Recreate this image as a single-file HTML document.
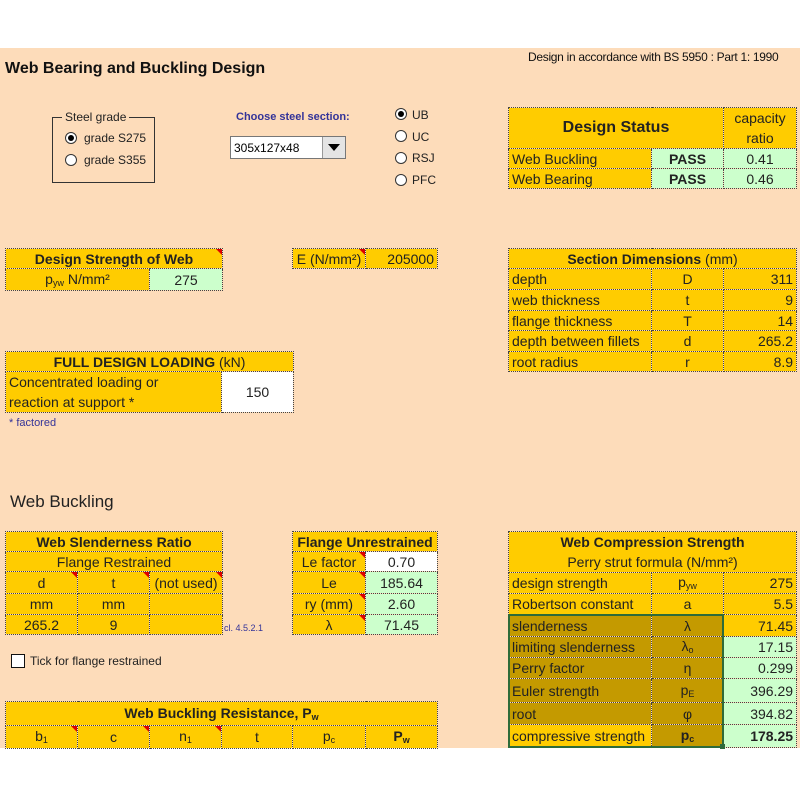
<!DOCTYPE html>
<html><head><meta charset="utf-8"><style>
*{margin:0;padding:0;box-sizing:border-box}
body{width:800px;height:800px;background:#fff;position:relative;font-family:"Liberation Sans",Arial,sans-serif;overflow:hidden}
#bg{position:absolute;left:0;top:48px;width:800px;height:700px;background:#FDDCBA}
.a{position:absolute}
table{position:absolute;border-collapse:collapse;table-layout:fixed;font-size:14px;color:#222}
td{border:1px dotted #444;background:#FFCC00;padding:0 3px;white-space:nowrap;overflow:hidden;line-height:1}
.c{text-align:center}.r{text-align:right}.b{font-weight:bold}
.g{background:#CCFFCC}.w{background:#fff}.d{background:#C49A00}
.h{font-weight:bold;text-align:center;font-size:14px}
.rad{position:absolute;width:12px;height:12px;border-radius:50%;border:1px solid #333;background:#fff}
.rad.on::after{content:"";position:absolute;left:2px;top:2px;width:6px;height:6px;border-radius:50%;background:#000}
.sm{font-size:12px;color:#222}
.tri{position:relative}
.tri::after{content:"";position:absolute;right:0;top:0;border-top:6px solid #d00;border-left:6px solid transparent}
sub{font-size:9px;vertical-align:-2px}
</style></head><body>
<div id="bg"></div>
<div class="a b" style="left:5px;top:60px;font-size:16px;color:#111">Web Bearing and Buckling Design</div>
<div class="a" style="left:528px;top:50px;font-size:12px;color:#111;letter-spacing:-0.3px">Design in accordance with BS 5950 : Part 1: 1990</div>

<div class="a" style="left:52px;top:117px;width:103px;height:66px;border:1px solid #333"></div>
<div class="a sm" style="left:62px;top:110px;background:#FDDCBA;padding:0 3px">Steel grade</div>
<div class="rad on" style="left:65px;top:132px"></div><div class="a sm" style="left:84px;top:131px">grade S275</div>
<div class="rad" style="left:65px;top:154px"></div><div class="a sm" style="left:84px;top:153px">grade S355</div>

<div class="a b" style="left:236px;top:111px;font-size:11px;color:#333399">Choose steel section:</div>
<div class="a" style="left:230px;top:136px;width:116px;height:23px;background:#fff;border:1px solid #777;font-size:12px;padding:4px 3px">305x127x48</div>
<div class="a" style="left:322px;top:137px;width:23px;height:21px;background:#e4e4e4;border-left:1px solid #999"><div style="margin:7px auto 0;width:0;height:0;border-left:6px solid transparent;border-right:6px solid transparent;border-top:7px solid #000"></div></div>

<div class="rad on" style="left:395px;top:108px"></div><div class="a sm" style="left:412px;top:108px">UB</div>
<div class="rad" style="left:395px;top:130px"></div><div class="a sm" style="left:412px;top:130px">UC</div>
<div class="rad" style="left:395px;top:152px"></div><div class="a sm" style="left:412px;top:151px">RSJ</div>
<div class="rad" style="left:395px;top:174px"></div><div class="a sm" style="left:412px;top:173px">PFC</div>

<table style="left:508px;top:107px;width:288px">
<col style="width:143px"><col style="width:72px"><col style="width:73px">
<tr style="height:41px"><td colspan="2" class="h" style="font-size:16px">Design Status</td><td class="c" style="line-height:20px">capacity<br>ratio</td></tr>
<tr style="height:20px"><td>Web Buckling</td><td class="g c b">PASS</td><td class="g c">0.41</td></tr>
<tr style="height:20px"><td>Web Bearing</td><td class="g c b">PASS</td><td class="g c">0.46</td></tr>
</table>

<table style="left:5px;top:248px;width:217px">
<col style="width:144px"><col style="width:73px">
<tr style="height:20px"><td colspan="2" class="h tri">Design Strength of Web</td></tr>
<tr style="height:22px"><td class="c">p<sub>yw</sub> N/mm²</td><td class="g c">275</td></tr>
</table>

<table style="left:292px;top:248px;width:145px">
<col style="width:73px"><col style="width:72px">
<tr style="height:20px"><td class="c tri">E (N/mm²)</td><td class="r">205000</td></tr>
</table>

<table style="left:508px;top:248px;width:288px">
<col style="width:143px"><col style="width:72px"><col style="width:73px">
<tr style="height:20px"><td colspan="3" class="c"><b>Section Dimensions</b> (mm)</td></tr>
<tr style="height:21px"><td>depth</td><td class="c">D</td><td class="r">311</td></tr>
<tr style="height:21px"><td>web thickness</td><td class="c">t</td><td class="r">9</td></tr>
<tr style="height:20px"><td>flange thickness</td><td class="c">T</td><td class="r">14</td></tr>
<tr style="height:21px"><td>depth between fillets</td><td class="c">d</td><td class="r">265.2</td></tr>
<tr style="height:20px"><td>root radius</td><td class="c">r</td><td class="r">8.9</td></tr>
</table>

<table style="left:5px;top:351px;width:288px">
<col style="width:216px"><col style="width:72px">
<tr style="height:20px"><td colspan="2" class="c"><b>FULL DESIGN LOADING</b> (kN)</td></tr>
<tr style="height:40px"><td style="line-height:20px">Concentrated loading or<br>reaction at support *</td><td class="w c">150</td></tr>
</table>
<div class="a" style="left:9px;top:417px;font-size:11px;color:#333399">* factored</div>

<div class="a" style="left:10px;top:492px;font-size:17px;color:#222">Web Buckling</div>

<table style="left:5px;top:531px;width:217px">
<col style="width:72px"><col style="width:72px"><col style="width:73px">
<tr style="height:20px"><td colspan="3" class="h">Web Slenderness Ratio</td></tr>
<tr style="height:20px"><td colspan="3" class="c">Flange Restrained</td></tr>
<tr style="height:22px"><td class="c tri">d</td><td class="c tri">t</td><td class="c tri">(not used)</td></tr>
<tr style="height:21px"><td class="c">mm</td><td class="c">mm</td><td></td></tr>
<tr style="height:20px"><td class="c">265.2</td><td class="c">9</td><td></td></tr>
</table>
<div class="a" style="left:224px;top:623px;font-size:9px;color:#333399">cl. 4.5.2.1</div>

<table style="left:292px;top:531px;width:145px">
<col style="width:73px"><col style="width:72px">
<tr style="height:20px"><td colspan="2" class="h">Flange Unrestrained</td></tr>
<tr style="height:20px"><td class="c tri">Le factor</td><td class="w c">0.70</td></tr>
<tr style="height:22px"><td class="c tri">Le</td><td class="g c">185.64</td></tr>
<tr style="height:21px"><td class="c tri">ry (mm)</td><td class="g c">2.60</td></tr>
<tr style="height:20px"><td class="c tri">λ</td><td class="g c">71.45</td></tr>
</table>

<div class="a" style="left:11px;top:654px;width:14px;height:14px;border:1px solid #111;background:#fff"></div>
<div class="a sm" style="left:30px;top:654px">Tick for flange restrained</div>

<table style="left:5px;top:701px;width:432px">
<col style="width:72px"><col style="width:72px"><col style="width:72px"><col style="width:71px"><col style="width:73px"><col style="width:72px">
<tr style="height:24px"><td colspan="6" class="h">Web Buckling Resistance, P<sub>w</sub></td></tr>
<tr style="height:23px"><td class="c tri">b<sub>1</sub></td><td class="c tri">c</td><td class="c tri">n<sub>1</sub></td><td class="c">t</td><td class="c">p<sub>c</sub></td><td class="c b">P<sub>w</sub></td></tr>
</table>

<table style="left:508px;top:531px;width:288px">
<col style="width:143px"><col style="width:72px"><col style="width:73px">
<tr style="height:41px"><td colspan="3" class="c" style="line-height:20px"><b>Web Compression Strength</b><br>Perry strut formula (N/mm²)</td></tr>
<tr style="height:21px"><td>design strength</td><td class="c">p<sub>yw</sub></td><td class="r">275</td></tr>
<tr style="height:21px"><td>Robertson constant</td><td class="c">a</td><td class="r">5.5</td></tr>
<tr style="height:22px"><td class="d">slenderness</td><td class="d c">λ</td><td class="r">71.45</td></tr>
<tr style="height:21px"><td class="d">limiting slenderness</td><td class="d c">λ<sub>o</sub></td><td class="g r">17.15</td></tr>
<tr style="height:21px"><td class="d">Perry factor</td><td class="d c">η</td><td class="g r">0.299</td></tr>
<tr style="height:24px"><td class="d">Euler strength</td><td class="d c">p<sub>E</sub></td><td class="g r">396.29</td></tr>
<tr style="height:22px"><td class="d">root</td><td class="d c">φ</td><td class="g r">394.82</td></tr>
<tr style="height:23px"><td>compressive strength</td><td class="d c b">p<sub>c</sub></td><td class="g r b">178.25</td></tr>
</table>
<div class="a" style="left:508px;top:614px;width:216px;height:134px;border:2px solid #2E6B3A"></div>
<div class="a" style="left:720px;top:744px;width:5px;height:5px;background:#2E6B3A"></div>
</body></html>
